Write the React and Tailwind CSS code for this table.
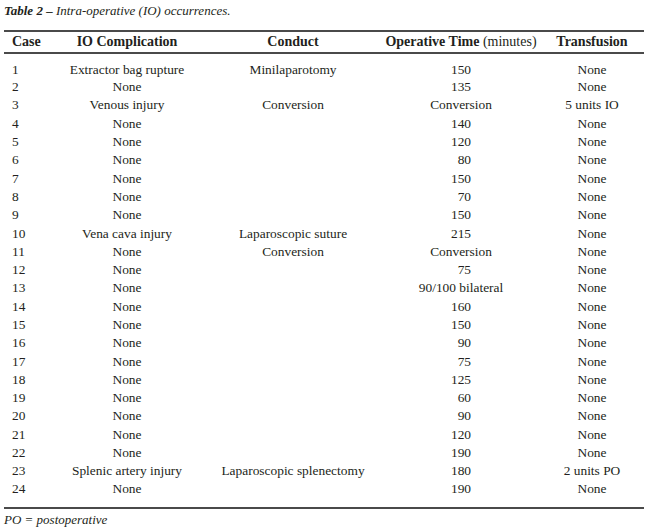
import React from "react";

const rows = [
  ["1", "Extractor bag rupture", "Minilaparotomy", "150", "None"],
  ["2", "None", "", "135", "None"],
  ["3", "Venous injury", "Conversion", "Conversion", "5 units IO"],
  ["4", "None", "", "140", "None"],
  ["5", "None", "", "120", "None"],
  ["6", "None", "", "\u200780", "None"],
  ["7", "None", "", "150", "None"],
  ["8", "None", "", "\u200770", "None"],
  ["9", "None", "", "150", "None"],
  ["10", "Vena cava injury", "Laparoscopic suture", "215", "None"],
  ["11", "None", "Conversion", "Conversion", "None"],
  ["12", "None", "", "\u200775", "None"],
  ["13", "None", "", "90/100 bilateral", "None"],
  ["14", "None", "", "160", "None"],
  ["15", "None", "", "150", "None"],
  ["16", "None", "", "\u200790", "None"],
  ["17", "None", "", "\u200775", "None"],
  ["18", "None", "", "125", "None"],
  ["19", "None", "", "\u200760", "None"],
  ["20", "None", "", "\u200790", "None"],
  ["21", "None", "", "120", "None"],
  ["22", "None", "", "190", "None"],
  ["23", "Splenic artery injury", "Laparoscopic splenectomy", "180", "2 units PO"],
  ["24", "None", "", "190", "None"],
];

const App = () => {
  return (
    <div className="w-[650px] h-[529px] bg-white text-[#231f20] font-['Liberation_Serif',serif] text-[13.4px] leading-[15px] overflow-hidden">
      <div className="pl-[4px] pt-[3px] h-[30px] italic text-[13px]">
        <span className="font-bold">Table 2 –</span> Intra-operative (IO) occurrences.
      </div>
      <table className="ml-[4px] w-[640px] table-fixed border-collapse">
        <colgroup>
          <col className="w-[46px]" />
          <col className="w-[154px]" />
          <col className="w-[178px]" />
          <col className="w-[158px]" />
          <col className="w-[104px]" />
        </colgroup>
        <thead className="text-[14px]">
          <tr className="border-t-2 border-b-2 border-[#4a4a4a]">
            <th className="h-[22px] p-0 pl-[8px] pb-[1px] text-left font-bold">Case</th>
            <th className="p-0 pb-[1px] font-bold">IO Complication</th>
            <th className="p-0 pb-[1px] font-bold">Conduct</th>
            <th className="p-0 pb-[1px] font-bold">
              Operative Time <span className="font-normal">(minutes)</span>
            </th>
            <th className="p-0 pb-[1px] font-bold">Transfusion</th>
          </tr>
        </thead>
        <tbody className="border-b-2 border-[#4a4a4a]">
          {rows.map((r, i) => (
            <tr
              key={r[0]}
              className={
                i === 0
                  ? "h-[25px] align-bottom"
                  : i === rows.length - 1
                  ? "h-[27px] align-top"
                  : "h-[18.3px] align-middle"
              }
            >
              <td className="p-0 pl-[8px] pb-[1px] text-left">{r[0]}</td>
              <td className="p-0 pb-[1px] text-center">{r[1]}</td>
              <td className="p-0 pb-[1px] text-center">{r[2]}</td>
              <td className="p-0 pb-[1px] text-center">{r[3]}</td>
              <td className="p-0 pb-[1px] text-center">{r[4]}</td>
            </tr>
          ))}
        </tbody>
      </table>
      <div className="pl-[4px] pt-[3px] italic text-[13px]">PO = postoperative</div>
    </div>
  );
};

export default App;
